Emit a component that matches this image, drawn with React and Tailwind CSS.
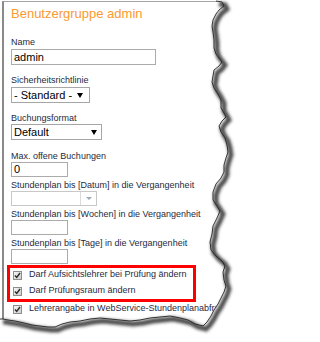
import React from "react";

const edgePts = [
  [216,1],[222,2],[224,6],[219,10],[216,14],[213,20],[212,26],[213,32],[214,40],[214,48],[216,54],[219,58],[222,62],[219,66],[214,70],[213,76],[212,82],[214,88],[218,94],[221,100],[221,108],[224,113],[226,117],[222,121],[219,126],[221,132],[225,138],[227,145],[228,152],[226,158],[224,165],[224,172],[221,178],[216,184],[213,192],[213,200],[217,206],[220,211],[217,218],[213,226],[212,234],[210,242],[211,250],[216,256],[222,261],[225,266],[223,272],[224,280],[226,286],[224,292],[221,298],[218,304],[214,310],[211,316],[207,322],[203,326],
  [195,324],[188,320],[180,318],[170,316],[160,317],[150,318],[140,320],[130,321],[120,320],[110,319],[100,318],[90,319],[80,321],[70,322],[62,324],[55,327],[48,327],[40,326],[32,325],[24,323],[15,321],[8,320],[3,319],[0,319]
];
const edgeStr = edgePts.map(p => p.join(",")).join(" ");
const fillStr = edgeStr + " 0,342 240,342 240,0 216,0";

function Label({ children, className = "" }) {
  return <div className={"h-[12px] text-[9px] leading-[12px] text-[#262a3e] whitespace-nowrap " + className}>{children}</div>;
}

function Arrow() {
  return <span className="w-0 h-0 border-l-[3px] border-r-[3px] border-t-[5px] border-l-transparent border-r-transparent border-t-black" />;
}

function Check() {
  return (
    <span className="w-[9px] h-[9px] border border-[#8e8e8e] bg-gradient-to-br from-[#f4f4f4] to-[#cfcfcf] flex items-center justify-center shrink-0">
      <svg width="7" height="7" viewBox="0 0 7 7">
        <path d="M1 3.6 L2.7 5.4 L6 1" fill="none" stroke="#2a2a2a" strokeWidth="1.4" />
      </svg>
    </span>
  );
}

function CheckRow({ children }) {
  return (
    <div className="h-[14px] flex items-center whitespace-nowrap">
      <Check />
      <span className="ml-[7px] text-[9px] text-[#1f2a44]">{children}</span>
    </div>
  );
}

export default function App() {
  return (
    <div className="relative w-[240px] h-[342px] bg-white overflow-hidden" style={{ fontFamily: "'Liberation Sans', Arial, sans-serif" }}>
      <div className="mt-[1px] ml-[2px] h-[341px] border-t border-t-[#a3a3a3] border-l-2 border-l-[#8a8a8a] pl-[7px] pt-[4px]">
        <div className="h-[15px] text-[13px] leading-[15px] text-[#f99a31] whitespace-nowrap">Benutzergruppe admin</div>

        <Label className="mt-[15px]">Name</Label>
        <div className="mt-[1px] w-[145px] h-[16px] border border-[#ababab] flex items-center pl-[2px] text-[11px] text-black">admin</div>

        <Label className="mt-[9px]">Sicherheitsrichtlinie</Label>
        <div className="mt-[1px] w-[79px] h-[16px] border border-[#a6a6a6] flex items-center justify-between pl-[2px] pr-[6px] text-[11px] text-black">
          <span>- Standard -</span>
          <Arrow />
        </div>

        <Label className="mt-[9px]">Buchungsformat</Label>
        <div className="w-[91px] h-[16px] border border-[#a6a6a6] flex items-center justify-between pl-[2px] pr-[4px] text-[11px] text-black">
          <span>Default</span>
          <Arrow />
        </div>

        <Label className="mt-[10px]">Max. offene Buchungen</Label>
        <div className="w-[57px] h-[15px] border border-[#ababab] flex items-center pl-[2px] text-[11px] text-black">0</div>

        <Label className="mt-[2px]">Stundenplan bis [Datum] in die Vergangenheit</Label>
        <div className="w-[86px] h-[15px] border border-[#c8c8c8] flex">
          <div className="flex-1" />
          <div className="w-[16px] border-l border-l-[#dadada] flex items-center justify-center">
            <span className="w-0 h-0 border-l-[3px] border-r-[3px] border-t-[3px] border-l-transparent border-r-transparent border-t-[#9aaabb]" />
          </div>
        </div>

        <Label className="mt-[2px]">Stundenplan bis [Wochen] in die Vergangenheit</Label>
        <div className="w-[57px] h-[15px] border border-[#ababab]" />

        <Label className="mt-[2px]">Stundenplan bis [Tage] in die Vergangenheit</Label>
        <div className="w-[57px] h-[15px] border border-[#ababab]" />

        <div className="mt-[1px] ml-[-4px] w-[189px] h-[37px] border-[3px] border-[#ff0000] pl-[3px] flex flex-col gap-[2px]">
          <CheckRow>Darf Aufsichtslehrer bei Prüfung ändern</CheckRow>
          <CheckRow>Darf Prüfungsraum ändern</CheckRow>
        </div>
        <div className="pl-[2px]">
          <CheckRow>Lehrerangabe in WebService-Stundenplanabfrage</CheckRow>
        </div>
      </div>

      <svg className="absolute inset-0 pointer-events-none" width="240" height="342" viewBox="0 0 240 342">
        <defs>
          <filter id="sh" x="-10%" y="-10%" width="120%" height="120%">
            <feGaussianBlur stdDeviation="1.5" />
          </filter>
        </defs>
        <polygon points={fillStr} fill="#ffffff" />
        <polyline points={edgeStr} fill="none" stroke="#2e2e2e" strokeWidth="5" strokeOpacity="0.85" filter="url(#sh)" transform="translate(3,3)" />
        <polyline points={edgeStr} fill="none" stroke="#222222" strokeWidth="0.9" />
      </svg>
    </div>
  );
}
